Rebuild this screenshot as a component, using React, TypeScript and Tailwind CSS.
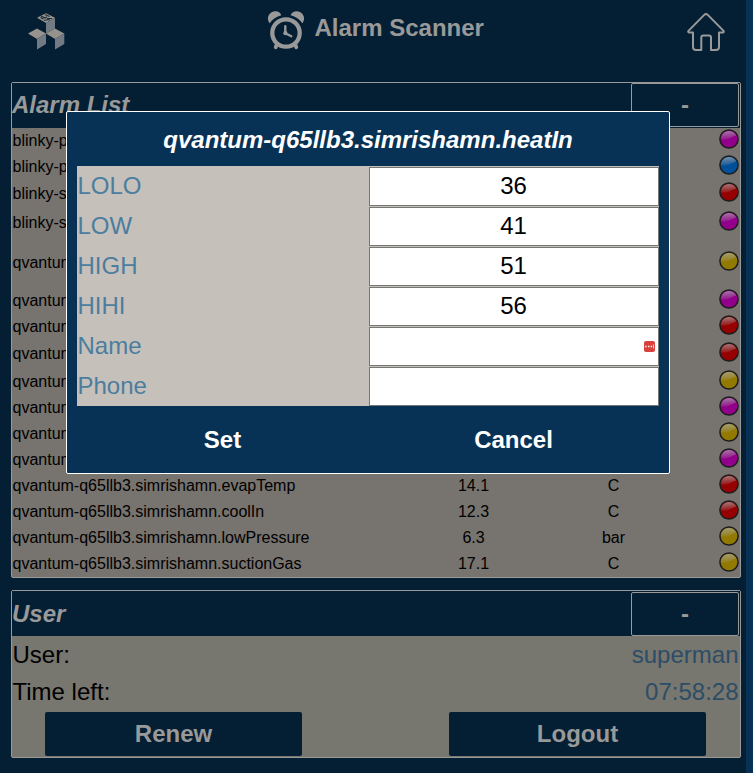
import React from "react";

type AlarmColor = "magenta" | "blue" | "red" | "yellow";

interface Alarm {
  name: string;
  value?: string;
  unit?: string;
  color: AlarmColor;
  height: string;
}

const DEVICE = "qvantum-q65llb3.simrishamn";

const alarms: Alarm[] = [
  { name: "blinky-p", color: "magenta", height: "h-[26px]" },
  { name: "blinky-p", color: "blue", height: "h-[27px]" },
  { name: "blinky-s", color: "red", height: "h-[29px]" },
  { name: "blinky-s", color: "magenta", height: "h-[40px]" },
  { name: "qvantum", color: "yellow", height: "h-[38px]" },
  { name: "qvantum", color: "magenta", height: "h-[26px]" },
  { name: "qvantum", color: "red", height: "h-[27px]" },
  { name: "qvantum", color: "red", height: "h-[28px]" },
  { name: "qvantum", color: "yellow", height: "h-[26px]" },
  { name: "qvantum", color: "magenta", height: "h-[26px]" },
  { name: "qvantum", color: "yellow", height: "h-[26px]" },
  { name: "qvantum", color: "magenta", height: "h-[26px]" },
  { name: `${DEVICE}.evapTemp`, value: "14.1", unit: "C", color: "red", height: "h-[26px]" },
  { name: `${DEVICE}.coolIn`, value: "12.3", unit: "C", color: "red", height: "h-[26px]" },
  { name: `${DEVICE}.lowPressure`, value: "6.3", unit: "bar", color: "yellow", height: "h-[26px]" },
  { name: `${DEVICE}.suctionGas`, value: "17.1", unit: "C", color: "yellow", height: "h-[25px]" },
];

const fills: Record<AlarmColor, string> = {
  magenta: "#92008b",
  blue: "#004f99",
  red: "#960000",
  yellow: "#927a00",
};

const fields = [
  { label: "LOLO", value: "36" },
  { label: "LOW", value: "41" },
  { label: "HIGH", value: "51" },
  { label: "HIHI", value: "56" },
  { label: "Name", value: "", badge: true },
  { label: "Phone", value: "" },
];

function Lamp({ color }: { color: AlarmColor }) {
  return (
    <svg className="block size-5 shrink-0" viewBox="0 0 20 20">
      <defs>
        <linearGradient id="gloss" x1="0" y1="0" x2="0.15" y2="1">
          <stop offset="0" stopColor="#aaa" stopOpacity="0.75" />
          <stop offset="1" stopColor="#aaa" stopOpacity="0.12" />
        </linearGradient>
      </defs>
      <circle cx="10" cy="10" r="9.1" fill={fills[color]} stroke="#1d1d1d" strokeWidth="1.5" />
      <path d="M1.9 10.2A8.1 8.1 0 0 1 17.3 6.6C14 7.3 12 9.4 8.5 10.2C6 10.8 4 10.8 1.9 10.2Z" fill="url(#gloss)" />
    </svg>
  );
}

function Logo() {
  return (
    <svg className="block h-[38px] w-[38px]" viewBox="0 0 38 38">
      <path d="M9 4.800L18 .2L27 4.800L18 10Z" fill="#96938e" />
      <path d="M18 10L27 4.800V15.500L18 20.500Z" fill="#727b84" />
      <path d="M0 20.500L9 15.500L18 20.500L9 26Z" fill="#96938e" />
      <path d="M9 26L18 20.500V31L9 36.500Z" fill="#727b84" />
      <path d="M18 20.500L27 15.500L36.300 20.500L27 26Z" fill="#96938e" />
      <path d="M27 26L36.300 20.500V31L27 36.500Z" fill="#727b84" />
      <path
        d="M12.500 4.500L15.500 6M13 3L17 5L19 3.800M17 1.500L21.500 3.500M19 5.500H24M16 7.500L20 6.500L22 7"
        fill="none"
        stroke="#1b2c3a"
        strokeWidth="1.200"
      />
    </svg>
  );
}

function AlarmClock() {
  return (
    <svg className="block h-[39px] w-[38px]" viewBox="0 0 38 39">
      <g fill="#999">
        <path d="M2.700 12.300C0 9 .3 4 4.200 1.500C8-.7 13 0 14.300 4.200C9.500 5.500 5.200 8 2.700 12.300Z" />
        <path d="M35.300 12.300C38 9 37.700 4 33.800 1.500C30-.7 25 0 23.700 4.200C28.500 5.500 32.800 8 35.300 12.300Z" />
      </g>
      <circle cx="19" cy="22" r="13.700" fill="none" stroke="#999" strokeWidth="4.300" />
      <path d="M10 33L8.700 36.300M28 33L29.300 36.300" stroke="#999" strokeWidth="3.800" strokeLinecap="round" />
      <path d="M18.300 15.300V22.300L24.300 25.300" fill="none" stroke="#999" strokeWidth="2.400" strokeLinecap="round" strokeLinejoin="round" />
      <circle cx="18.400" cy="22.200" r="2.100" fill="#999" />
    </svg>
  );
}

function House() {
  return (
    <svg className="block h-[39px] w-[38px]" viewBox="0 0 38 39">
      <path
        d="M6 19.500H2.500C1 19.500 .9 18.500 1.700 17.600L17.200 1.900Q19 .2 20.800 1.900L36.300 17.600C37.100 18.500 37 19.500 35.500 19.500H32V34Q32 37 29 37H24V24.500Q24 22.500 22 22.500H16.300Q14.300 22.500 14.300 24.500V37H9Q6 37 6 34Z"
        fill="none"
        stroke="#999"
        strokeWidth="2"
        strokeLinejoin="round"
      />
    </svg>
  );
}

function PanelHeader({ title, className }: { title: string; className: string }) {
  return (
    <div className={`flex bg-[#041f33] ${className}`}>
      <h2 className="flex-1 text-2xl leading-[44px] font-bold text-[#999] italic">{title}</h2>
      <button className="mr-px h-11 w-[108px] rounded-xs border border-[#999] text-2xl leading-[42px] font-bold text-[#999]">
        -
      </button>
    </div>
  );
}

export default function App() {
  return (
    <div className="relative h-[773px] w-[753px] overflow-hidden bg-[#073256] font-['Liberation_Sans',Arial,sans-serif]">
      <div className="h-full w-[746px] bg-[#041f33] pr-[5px] pl-[11px]">
        <header className="flex h-[82px] items-start">
          <div className="w-[256px] pt-[13px] pl-[17px]">
            <Logo />
          </div>
          <div className="flex flex-1 gap-[9.500px] pt-[11px]">
            <AlarmClock />
            <h1 className="text-2xl leading-[34px] font-bold text-[#999]">Alarm Scanner</h1>
          </div>
          <div className="pt-[13px] pr-[16px]">
            <House />
          </div>
        </header>

        <section className="h-[496px] rounded-xs border border-[#999] bg-[#77736e]">
          <PanelHeader title="Alarm List" className="h-[45px]" />
          <div className="pt-px">
            {alarms.map((alarm, i) => (
              <div key={i} className={`flex pr-px text-base leading-[23px] text-black ${alarm.height}`}>
                <span className="w-[391.5px] pl-[0.5px]">{alarm.name}</span>
                <span className="w-[140px] text-center">{alarm.value}</span>
                <span className="w-[140px] text-center">{alarm.unit}</span>
                <span className="flex flex-1 justify-end">
                  <Lamp color={alarm.color} />
                </span>
              </div>
            ))}
          </div>
        </section>

        <section className="mt-3 h-[168px] rounded-xs border border-[#999] bg-[#77766f]">
          <PanelHeader title="User" className="h-[45px] pt-px" />
          <div className="flex h-[37px] justify-between pr-[1.5px] pl-[0.5px] text-2xl leading-[37px]">
            <span>User:</span>
            <span className="text-[#2d4d66]">superman</span>
          </div>
          <div className="flex h-[37px] justify-between pr-[1.5px] pl-[0.5px] text-2xl leading-[37px]">
            <span>Time left:</span>
            <span className="text-[#2d4d66]">07:58:28</span>
          </div>
          <div className="flex justify-between pt-[2px] pr-[34px] pl-[33px] text-2xl font-bold text-[#999]">
            <button className="h-11 w-[257px] rounded-xs bg-[#041f33]">Renew</button>
            <button className="h-11 w-[257px] rounded-xs bg-[#041f33]">Logout</button>
          </div>
        </section>
      </div>

      <div
        role="dialog"
        className="absolute top-[111px] left-[66px] h-[363px] w-[604px] rounded-xs border border-white bg-[#073256] px-[10px]"
      >
        <h2 className="h-[54px] text-center text-2xl leading-[56px] font-bold text-white italic">
          {DEVICE}.heatIn
        </h2>
        <div className="bg-[#c6c0ba]">
          {fields.map((field) => (
            <div key={field.label} className="flex h-10 text-2xl">
              <label className="w-[292px] pl-[0.5px] leading-10 text-[#4b7d9f]">{field.label}</label>
              <div className="mt-px flex h-[39px] w-[290px] items-center justify-center border border-[#767676] bg-white text-black">
                <span className="pr-px pb-[2px] leading-[35px]">{field.value}</span>
                {field.badge && (
                  <svg className="mr-[3px] ml-auto block h-[11px] w-[11px]" viewBox="0 0 11 11">
                    <rect width="11" height="11" rx="2" fill="#d9413d" />
                    <path d="M1.200 4.800h1.400v1.400H1.200zM4 4.800h1.400v1.400H4zM6.700 4.800h1.400v1.400H6.700zM9 3.500h.7v4H9z" fill="#fff" />
                  </svg>
                )}
              </div>
            </div>
          ))}
        </div>
        <div className="flex text-2xl leading-[67px] font-bold text-white">
          <button className="flex-1">Set</button>
          <button className="flex-1">Cancel</button>
        </div>
      </div>
    </div>
  );
}
